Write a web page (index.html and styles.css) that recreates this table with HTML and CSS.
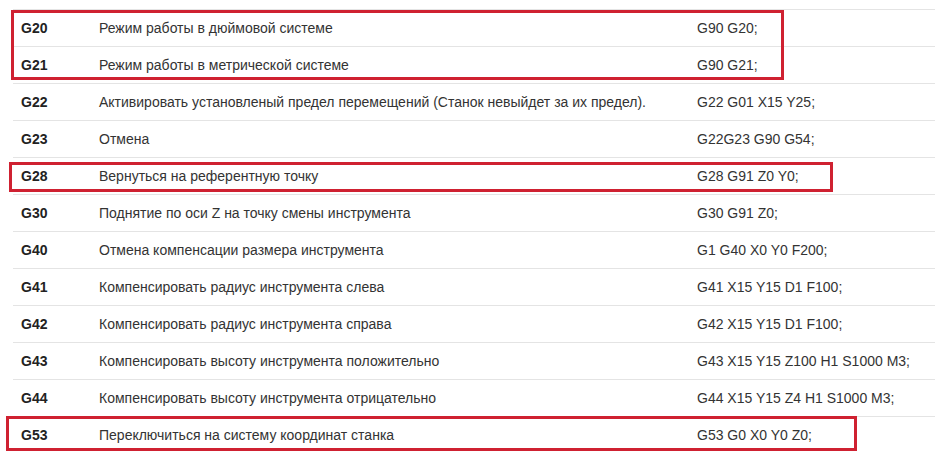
FILE: index.html
```html
<!DOCTYPE html>
<html lang="ru">
<head>
<meta charset="utf-8">
<title>G-коды</title>
<link rel="stylesheet" href="styles.css">
</head>
<body>
<div class="page">
  <table class="codes">
    <colgroup>
      <col class="c-code">
      <col class="c-desc">
      <col class="c-ex">
    </colgroup>
    <tbody>
      <tr><td class="code">G20</td><td>Режим работы в дюймовой системе</td><td>G90 G20;</td></tr>
      <tr><td class="code">G21</td><td>Режим работы в метрической системе</td><td>G90 G21;</td></tr>
      <tr><td class="code">G22</td><td>Активировать установленый предел перемещений (Станок невыйдет за их предел).</td><td>G22 G01 X15 Y25;</td></tr>
      <tr><td class="code">G23</td><td>Отмена</td><td>G22G23 G90 G54;</td></tr>
      <tr><td class="code">G28</td><td>Вернуться на референтную точку</td><td>G28 G91 Z0 Y0;</td></tr>
      <tr><td class="code">G30</td><td>Поднятие по оси Z на точку смены инструмента</td><td>G30 G91 Z0;</td></tr>
      <tr><td class="code">G40</td><td>Отмена компенсации размера инструмента</td><td>G1 G40 X0 Y0 F200;</td></tr>
      <tr><td class="code">G41</td><td>Компенсировать радиус инструмента слева</td><td>G41 X15 Y15 D1 F100;</td></tr>
      <tr><td class="code">G42</td><td>Компенсировать радиус инструмента справа</td><td>G42 X15 Y15 D1 F100;</td></tr>
      <tr><td class="code">G43</td><td>Компенсировать высоту инструмента положительно</td><td>G43 X15 Y15 Z100 H1 S1000 M3;</td></tr>
      <tr><td class="code">G44</td><td>Компенсировать высоту инструмента отрицательно</td><td>G44 X15 Y15 Z4 H1 S1000 M3;</td></tr>
      <tr><td class="code">G53</td><td>Переключиться на систему координат станка</td><td>G53 G0 X0 Y0 Z0;</td></tr>
    </tbody>
  </table>
  <div class="mark mark-1"></div>
  <div class="mark mark-2"></div>
  <div class="mark mark-3"></div>
</div>
</body>
</html>
```
FILE: styles.css
```css
html, body {
  margin: 0;
  padding: 0;
  background: #ffffff;
}
body {
  font-family: "Liberation Sans", Arial, sans-serif;
  font-size: 14px;
  color: #333333;
}
.page {
  position: relative;
  padding: 9px 0 0 13px;
  width: 922px;
}
.codes {
  width: 922px;
  border-collapse: collapse;
  table-layout: fixed;
}
.c-code { width: 78px; }
.c-desc { width: 598px; }
.codes td {
  padding: 8px;
  line-height: 20px;
  border-top: 1px solid #e4e4e4;
  vertical-align: top;
  white-space: nowrap;
}
.codes td.code {
  font-weight: bold;
  color: #222222;
}
.mark {
  position: absolute;
  border: 3px solid #cf2131;
  box-sizing: border-box;
}
.mark-1 { left: 11px; top: 10px; width: 773px; height: 70px; }
.mark-2 { left: 9px; top: 162px; width: 824px; height: 30px; }
.mark-3 { left: 6px; top: 416px; width: 851px; height: 35px; }
```
